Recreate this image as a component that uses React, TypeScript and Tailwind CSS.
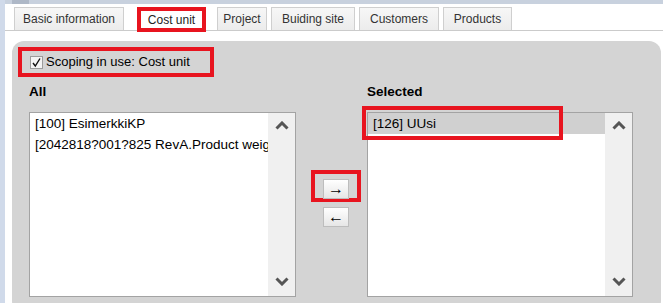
import React from "react";

const tabs = [
  { label: "Basic information", w: "w-[110px]" },
  { label: "Cost unit", w: "w-[69px]", active: true },
  { label: "Project", w: "w-[50px]" },
  { label: "Buiding site", w: "w-[84px]" },
  { label: "Customers", w: "w-[80px]" },
  { label: "Products", w: "w-[69px]" },
];

const Chevron = ({ up }: { up?: boolean }) => (
  <svg width="14" height="9" viewBox="0 0 14 9">
    <polyline
      points={up ? "1.5,7.5 7,2 12.5,7.5" : "1.5,1.5 7,7 12.5,1.5"}
      fill="none"
      stroke="#555"
      strokeWidth="3"
    />
  </svg>
);

const ListBox = ({
  items,
  selected,
}: {
  items: string[];
  selected?: number;
}) => (
  <div className="relative flex h-[185px] border border-[#a3a3a3] bg-white">
    <div className="flex-1 overflow-hidden">
      {items.map((it, i) => (
        <div
          key={it}
          className={`h-[21px] whitespace-nowrap pl-[5px] text-[13.5px] leading-[21px] ${
            i === selected ? "bg-[#d0d0d0]" : ""
          }`}
        >
          {it}
        </div>
      ))}
    </div>
    <div className="flex w-[27px] flex-col items-center justify-between bg-[#f0f0f0] pb-[10px] pt-[8px]">
      <Chevron up />
      <Chevron />
    </div>
    {selected !== undefined && (
      <div className="absolute left-[-6px] top-[-7px] h-[34px] w-[201px] border-4 border-[#e8141f]" />
    )}
  </div>
);

export default function App() {
  return (
    <div className="h-[303px] w-[663px] overflow-hidden border-l-[5px] border-[#d0daea] bg-white font-['Liberation_Sans',Arial,sans-serif] text-[12px] text-black">
      <div className="flex h-[4px] bg-[#c8d1de]">
        <div className="ml-[7px] w-[17px] bg-[#aeb8c7]" />
      </div>

      {/* tabs */}
      <div className="mt-[3px] flex h-[24px] items-start border-b border-[#cbcbcb] pl-[9px]">
        {tabs.map((t) =>
          t.active ? (
            <div
              key={t.label}
              className={`${t.w} relative z-10 ml-[9px] mr-[11px] flex h-[25px] items-center justify-center border-4 border-[#e8141f] bg-white text-[#222]`}
            >
              {t.label}
            </div>
          ) : (
            <div
              key={t.label}
              className={`${t.w} mr-[4px] flex h-[23px] items-center justify-center border border-b-0 border-[#cfcfcf] bg-gradient-to-b from-[#f7f7f7] to-[#ececec] text-[#333]`}
            >
              {t.label}
            </div>
          )
        )}
      </div>

      {/* panel */}
      <div className="ml-[7px] mt-[10px] h-[272px] w-[649px] rounded-[12px] bg-[#d4d4d4] pl-[6px] pt-[6px]">
        <div className="flex h-[30px] w-[196px] items-center border-4 border-[#e8141f] pl-[8px] text-[13px]">
          <span className="mr-[3px] flex h-[13px] w-[13px] items-center justify-center border border-[#9c9c9c] bg-[#f4f4f4]">
            <svg width="11" height="11" viewBox="0 0 11 11">
              <path d="M2 6 L4.3 9 L9 1.5" fill="none" stroke="#111" strokeWidth="1.4" />
            </svg>
          </span>
          <span>Scoping in use: Cost unit</span>
        </div>

        <div className="flex pl-[11px]">
          <div className="w-[267px]">
            <div className="mt-[7px] h-[16px] text-[13.5px] font-bold leading-[16px]">All</div>
            <div className="mt-[12px]">
              <ListBox
                items={["[100] EsimerkkiKP", "[2042818?001?825 RevA.Product weight"]}
              />
            </div>
          </div>

          <div className="flex w-[71px] flex-col pt-[93px]">
            <div className="ml-[15px] flex h-[32px] w-[50px] items-start justify-center border-4 border-[#e8141f] pt-[5px]">
              <button className="flex h-[20px] w-[26px] items-center justify-center border border-[#bdbdbd] bg-gradient-to-b from-white to-[#e6e6e6] text-[16px] leading-none">
                →
              </button>
            </div>
            <button className="ml-[27px] mt-[5px] flex h-[20px] w-[26px] items-center justify-center border border-[#bdbdbd] bg-gradient-to-b from-white to-[#e6e6e6] text-[16px] leading-none">
              ←
            </button>
          </div>

          <div className="w-[266px]">
            <div className="mt-[7px] h-[16px] text-[13.5px] font-bold leading-[16px]">Selected</div>
            <div className="mt-[12px]">
              <ListBox items={["[126] UUsi"]} selected={0} />
            </div>
          </div>
        </div>
      </div>
    </div>
  );
}
